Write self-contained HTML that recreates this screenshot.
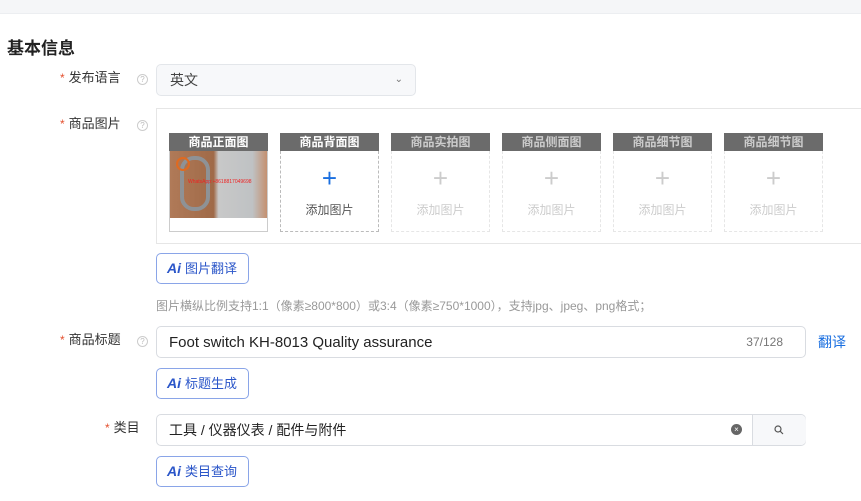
<!DOCTYPE html>
<html><head><meta charset="utf-8"><style>
*{box-sizing:border-box;margin:0;padding:0}
body{width:861px;height:501px;overflow:hidden;background:#fff;font-family:"Liberation Sans","Noto Sans CJK SC",sans-serif;color:#333;position:relative}
.abs{position:absolute}
.top{left:0;top:0;width:861px;height:14px;background:#f5f6f8;border-bottom:1px solid #eceef1}
h1{position:absolute;left:7px;top:34px;font-size:17px;font-weight:bold;color:#222}
.lbl{position:absolute;font-size:13px;color:#333;text-align:right;line-height:16px}
.lbl b{color:#e4502f;font-weight:normal;margin-right:4px;font-size:12px}
.q{position:absolute;width:11px;height:11px;border:1px solid #ccc;border-radius:50%;font-size:8px;color:#bbb;text-align:center;line-height:9px}
.inp{position:absolute;border:1px solid #d9dce1;border-radius:5px;background:#fff;font-size:15px;color:#222}
.ai{position:absolute;left:156px;width:93px;height:31px;border:1px solid #8aa5e8;border-radius:5px;color:#2b56c9;font-size:13px;line-height:29px;padding-left:10px}
.ai i{font-style:italic;font-weight:bold;font-size:14px;margin-right:4px}
.th{position:absolute;top:133px;width:99px;height:99px}
.th .hd{height:18px;background:#6b6b6b;color:#fff;font-size:12px;font-weight:bold;text-align:center;line-height:18px}
.th .bd{height:81px;border:1px dashed #ccc;border-top:none;text-align:center;padding-top:14px}
.th .pl{font-size:26px;line-height:26px;color:#1a6fe0}
.th .tx{font-size:12px;color:#555;margin-top:10px}
.th.d .hd{color:#ccc}
.th.d .bd{border-color:#e6e6e6}
.th.d .pl{color:#ccc;font-weight:300}
.th.d .tx{color:#ccc}
</style></head><body>
<div class="abs top"></div>
<h1>基本信息</h1>

<div class="lbl" style="left:60px;top:70px"><b>*</b>发布语言</div>
<div class="q" style="left:137px;top:74px">?</div>
<div class="inp" style="left:156px;top:64px;width:260px;height:32px;background:#f7f8fa;border-color:#e3e6ea;font-size:14px;line-height:30px;padding-left:13px;color:#444">英文<span style="position:absolute;right:12px;top:0;font-size:10px;color:#777">&#8964;</span></div>

<div class="lbl" style="left:60px;top:116px"><b>*</b>商品图片</div>
<div class="q" style="left:137px;top:120px">?</div>
<div class="abs" style="left:156px;top:108px;width:710px;height:136px;border:1px solid #e6e6e6"></div>

<div class="th" style="left:169px"><div class="hd">商品正面图</div>
<div style="height:81px;border:1px solid #ccc;border-top:none;position:relative">
<div style="position:absolute;left:0;top:0;width:97px;height:67px;background:linear-gradient(90deg,#b07a58 0,#a06a48 45%,#c8c8c8 50%,#bfc2c4 85%,#c49070 100%)"></div>
<div style="position:absolute;left:10px;top:5px;width:30px;height:55px;border:4px solid #8e9296;border-radius:14px"></div>
<div style="position:absolute;left:6px;top:6px;width:14px;height:14px;border:2px solid #e06a20;border-radius:50%"></div>
<div style="position:absolute;left:18px;top:28px;font-size:5px;color:#e22">WhatsApp:+8618817049698</div>
</div></div>
<div class="th" style="left:280px"><div class="hd">商品背面图</div><div class="bd" style="border-color:#bbb"><div class="pl">+</div><div class="tx">添加图片</div></div></div>
<div class="th d" style="left:391px"><div class="hd">商品实拍图</div><div class="bd"><div class="pl">+</div><div class="tx">添加图片</div></div></div>
<div class="th d" style="left:502px"><div class="hd">商品侧面图</div><div class="bd"><div class="pl">+</div><div class="tx">添加图片</div></div></div>
<div class="th d" style="left:613px"><div class="hd">商品细节图</div><div class="bd"><div class="pl">+</div><div class="tx">添加图片</div></div></div>
<div class="th d" style="left:724px"><div class="hd">商品细节图</div><div class="bd"><div class="pl">+</div><div class="tx">添加图片</div></div></div>

<div class="ai" style="top:253px"><i>Ai</i>图片翻译</div>
<div class="abs" style="left:156px;top:297px;font-size:12px;color:#999">图片横纵比例支持1:1（像素≥800*800）或3:4（像素≥750*1000），支持jpg、jpeg、png格式；</div>

<div class="lbl" style="left:60px;top:332px"><b>*</b>商品标题</div>
<div class="q" style="left:137px;top:336px">?</div>
<div class="inp" style="left:156px;top:326px;width:650px;height:32px;line-height:31px;padding-left:12px">Foot switch KH-8013 Quality assurance<span style="position:absolute;right:22px;top:0;font-size:12px;color:#777">37/128</span></div>
<div class="abs" style="left:818px;top:332px;font-size:14px;color:#1a6fe0">翻译</div>

<div class="ai" style="top:368px"><i>Ai</i>标题生成</div>

<div class="lbl" style="left:105px;top:420px"><b>*</b>类目</div>
<div class="inp" style="left:156px;top:414px;width:650px;height:32px;line-height:30px;padding-left:12px;font-size:14px">工具 / 仪器仪表 / 配件与附件
<span style="position:absolute;left:574px;top:9px;width:11px;height:11px;border-radius:50%;background:#666;color:#fff;font-size:8px;line-height:11px;text-align:center">×</span>
<span style="position:absolute;left:595px;top:0;width:54px;height:30px;border-left:1px solid #d9dce1;background:#f7f8fa;border-radius:0 5px 5px 0">
<svg width="10" height="10" viewBox="0 0 10 10" style="position:absolute;left:21px;top:10px"><circle cx="4" cy="4" r="3" fill="none" stroke="#555" stroke-width="1.2"/><path d="M6.3 6.3L9 9" stroke="#555" stroke-width="1.2"/></svg></span></div>

<div class="ai" style="top:456px"><i>Ai</i>类目查询</div>
</body></html>
